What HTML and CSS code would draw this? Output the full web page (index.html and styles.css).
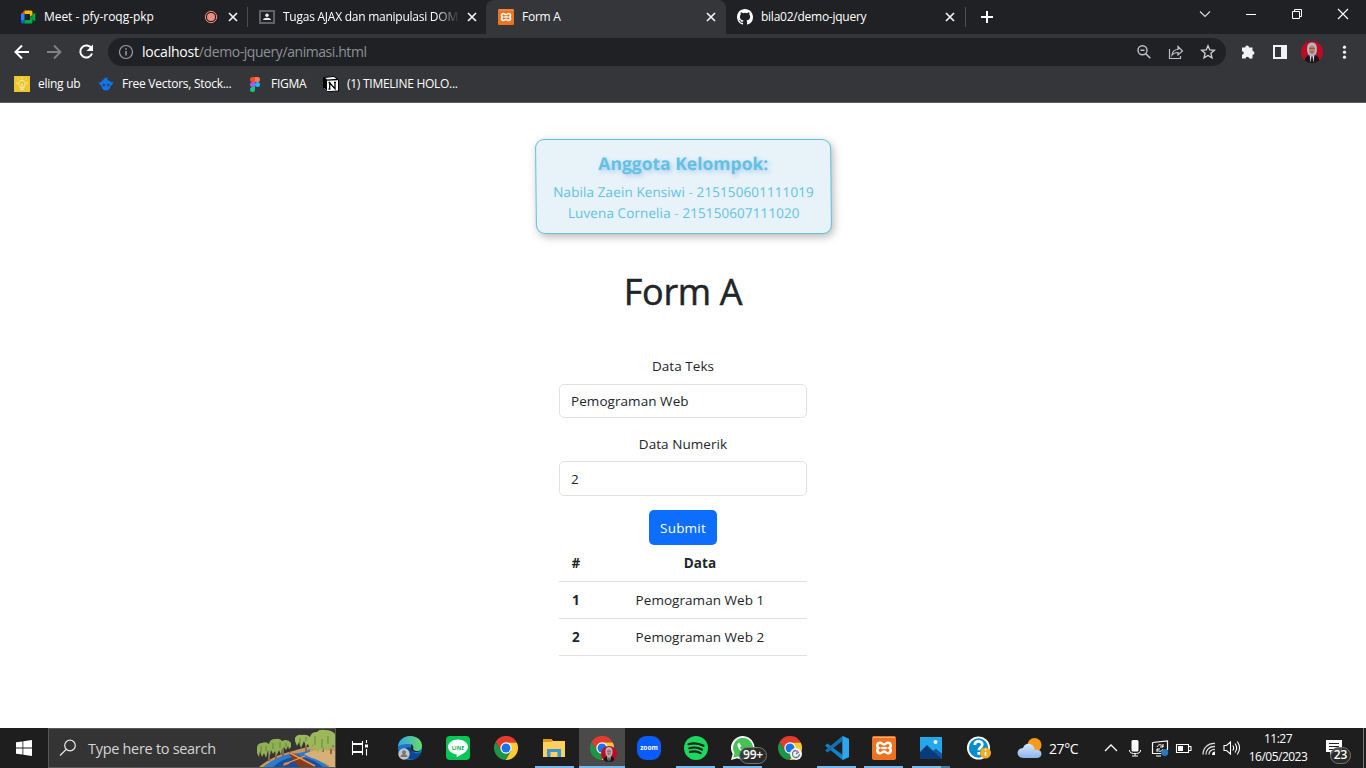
FILE: index.html
```html
<!DOCTYPE html>
<html lang="id">
<head>
<meta charset="utf-8">
<title>Form A</title>
<link rel="stylesheet" href="styles.css">
</head>
<body>
<svg class="defs" width="0" height="0" aria-hidden="true">
  <defs>
    <symbol id="close" viewBox="0 0 16 16"><path d="M4 4l8 8M12 4l-8 8" stroke="#f1f3f4" stroke-width="1.7" fill="none"/></symbol>
    <symbol id="chrome" viewBox="0 0 24 24">
      <path d="M12 6.500H22.700A12 12 0 0 0 1.600 6L7.200 14.800z" fill="#e33b2e"/>
      <path d="M16.800 14.800L11.500 24A12 12 0 0 0 22.700 6.500H12z" fill="#fcc934"/>
      <path d="M7.200 14.800L1.600 6A12 12 0 0 0 11.500 24l5.300-9.200z" fill="#1e9447"/>
      <circle cx="12" cy="12" r="5.700" fill="#fff"/><circle cx="12" cy="12" r="4.500" fill="#1a73e8"/>
    </symbol>
    <symbol id="xampp" viewBox="0 0 24 24">
      <rect width="24" height="24" rx="2" fill="#ee7320"/><path d="M1 1.500h22" stroke="#f7b184"/>
      <g transform="translate(1.200 1.200) scale(.9)"><path d="M7.700 6.200c2.200 0 2.200 1.800 4.300 1.800s2.100-1.800 4.300-1.800c3.600 0 4.100 4.500 1.600 5.800 2.500 1.300 2 5.800-1.600 5.800-2.200 0-2.200-1.800-4.300-1.800s-2.100 1.800-4.300 1.800c-3.600 0-4.100-4.500-1.600-5.800-2.500-1.300-2-5.800 1.600-5.800z" fill="none" stroke="#fff" stroke-width="2.800"/>
      <path d="M9 12h6" stroke="#fff" stroke-width="2.500"/></g>
    </symbol>
    <symbol id="person" viewBox="0 0 24 24">
      <circle cx="12" cy="12" r="12" fill="#c00925"/>
      <path d="M4 21Q4.500 16.500 8.500 15.500h7q4 1 4.500 5.500A12 12 0 0 1 4 21z" fill="#15171e"/>
      <path d="M12 1.500C6 1.500 6.500 8 6.800 11c.2 3.500 2.700 6 5.200 6s5-2.500 5.200-6c.3-3 .8-9.500-5.200-9.500z" fill="#aeb9c4"/>
      <ellipse cx="12" cy="9.700" rx="3.300" ry="4.700" fill="#b98672"/><path d="M9 8h6M10.500 12h3" stroke="#72463b" stroke-width=".9"/>
      <path d="M9.500 16l2.500 1.500 2.500-1.500-1 7h-3z" fill="#eee"/><path d="M11.200 17.500h1.600l.4 6h-2.400z" fill="#111"/>
    </symbol>
  </defs>
</svg>

<header class="browser">
  <div class="tabstrip">
    <div class="tab">
      <svg class="fav" viewBox="0 0 16 16"><path d="M1 5l3.500-3.500V5z" fill="#ea4335"/><path d="M4.500 1.500H11q1.500 0 1.500 1.500v3L10 8V5H4.500z" fill="#fbbc04"/><path d="M1 5h3.500v6H1z" fill="#2684fc"/><path d="M1 11h3.500v3.500H2.500Q1 14.500 1 13z" fill="#0066da"/><path d="M4.500 11H10V8l2.500 2v3q0 1.500-1.500 1.500H4.500zM10 8l4.500-4q.8-.5.8.4v7.200q0 .9-.8.4z" fill="#00ac47"/><path d="M10 8l2.500-2v4z" fill="#00832d"/></svg>
      <span class="tab-title t-meet">Meet - pfy-roqg-pkp</span>
      <svg class="rec" viewBox="0 0 14 14"><circle cx="7" cy="7" r="5.700" fill="none" stroke="#f28b82"/><circle cx="7" cy="7" r="4" fill="#f28b82"/></svg>
      <svg class="x"><use href="#close"/></svg>
    </div>
    <div class="tab">
      <svg class="fav" viewBox="0 0 16 16"><path d="M1 2h14v12H1z" fill="#202124" stroke="#5f6368" stroke-width="2"/><circle cx="8" cy="6.300" r="1.700" fill="#e8eaed"/><path d="M4 11c0-3 8-3 8 0z" fill="#e8eaed"/></svg>
      <span class="tab-title fade">Tugas AJAX dan manipulasi DOM</span>
      <svg class="x"><use href="#close"/></svg>
    </div>
    <div class="tab active">
      <svg class="fav"><use href="#xampp"/></svg>
      <span class="tab-title">Form A</span>
      <svg class="x"><use href="#close"/></svg>
    </div>
    <div class="tab">
      <svg class="fav" viewBox="0 0 16 16"><path fill="#fff" d="M8 0C3.580 0 0 3.580 0 8c0 3.540 2.290 6.530 5.470 7.590.4.070.55-.17.55-.38v-1.490c-2.010.37-2.530-.49-2.690-.94-.09-.23-.48-.94-.82-1.130-.28-.15-.68-.52-.01-.53.63-.01 1.080.58 1.230.82.72 1.210 1.870.87 2.330.66.070-.52.280-.87.510-1.070-1.780-.2-3.640-.89-3.640-3.950 0-.87.310-1.590.820-2.150-.080-.2-.36-1.020.080-2.120 0 0 .67-.21 2.200.82a7.400 7.400 0 0 1 4 0c1.530-1.040 2.200-.82 2.200-.82.440 1.100.160 1.920.080 2.120.510.560.820 1.270.820 2.150 0 3.070-1.870 3.750-3.650 3.950.290.250.540.730.540 1.480v2.200c0 .21.150.46.550.38A8 8 0 0 0 16 8c0-4.420-3.580-8-8-8z"/></svg>
      <span class="tab-title">bila02/demo-jquery</span>
      <svg class="x"><use href="#close"/></svg>
    </div>
    <div class="newtab"><svg width="16" height="16" viewBox="0 0 16 16"><path d="M8 2v12M2 8h12" stroke="#fff" stroke-width="2"/></svg></div>
    <div class="window-buttons">
      <svg viewBox="0 0 16 16"><path d="M3 5.500l5 5 5-5" fill="none" stroke="#ddd" stroke-width="1.100"/></svg>
      <svg viewBox="0 0 16 16"><path d="M3 8.500h10" stroke="#fff"/></svg>
      <svg viewBox="0 0 16 16"><path d="M3.500 5.500h7v7h-7zM5.500 5.500v-2h7v7h-2" fill="none" stroke="#fff"/></svg>
      <svg viewBox="0 0 16 16"><path d="M3 3l10 10M13 3L3 13" stroke="#fff" stroke-width="1.100"/></svg>
    </div>
  </div>

  <div class="toolbar">
    <div class="nav">
      <svg viewBox="0 0 20 20"><path d="M17 10H4M10 3.500L3.500 10l6.500 6.500" fill="none" stroke="#fff" stroke-width="2"/></svg>
      <svg viewBox="0 0 20 20"><path d="M3 10h13M10 3.500l6.500 6.500-6.500 6.500" fill="none" stroke="#818286" stroke-width="1.800"/></svg>
      <svg viewBox="0 0 20 20"><path d="M15.500 6.500A6 6 0 1 0 16 11.500" fill="none" stroke="#fff" stroke-width="2"/><path d="M17 2.500v6.500h-6.500z" fill="#fff"/></svg>
    </div>
    <div class="omnibox">
      <svg class="info" viewBox="0 0 16 16"><circle cx="8" cy="8" r="6.500" fill="none" stroke="#9aa0a6" stroke-width="1.200"/><path d="M8 7v4.500M8 4.200v1.600" stroke="#9aa0a6" stroke-width="1.500"/></svg>
      <span class="url"><b>localhost</b>/demo-jquery/animasi.html</span>
      <div class="omni-icons">
        <svg viewBox="0 0 16 16"><circle cx="6.500" cy="6.300" r="4.500" fill="none" stroke="#bdc1c6" stroke-width="1.400"/><path d="M4.500 6.300h4M9.800 9.800l4.500 4.500" stroke="#bdc1c6" stroke-width="1.600"/></svg>
        <svg viewBox="0 0 16 16"><path d="M1.500 5v9.500h11V12M4 11c.5-4 3-5.500 6-5.500V2.500L14.500 7 10 11V8.500C7.500 8.500 5.500 9 4 11z" fill="none" stroke="#bdc1c6" stroke-width="1.200"/></svg>
        <svg viewBox="0 0 16 16"><path d="M8 1.700l1.800 4.200 4.600.4-3.500 3 1.100 4.500L8 11.400l-4 2.400 1.100-4.500-3.500-3 4.600-.4z" fill="none" stroke="#d0d3d6" stroke-width="1.300"/></svg>
      </div>
    </div>
    <div class="actions">
      <svg viewBox="0 0 16 16"><path fill="#f1f3f4" d="M2 3.500h3.200a1.900 1.900 0 1 1 3.800 0h3.500V7a1.900 1.900 0 1 1 0 3.800v3.700H9.200a1.800 1.800 0 0 0-3.600 0H2v-3.700a1.800 1.800 0 0 0 0-3.600z"/></svg>
      <svg viewBox="0 0 16 16"><path d="M1 1h14v14H1zM3 3v10h6V3z" fill="#f1f3f4" fill-rule="evenodd"/></svg>
      <svg class="avatar"><use href="#person"/></svg>
      <svg viewBox="0 0 16 16"><circle cx="8.500" cy="3.200" r="1.600" fill="#f1f3f4"/><circle cx="8.500" cy="8.200" r="1.600" fill="#f1f3f4"/><circle cx="8.500" cy="13.200" r="1.600" fill="#f1f3f4"/></svg>
    </div>
  </div>

  <div class="bookmarks">
    <span class="bm bm1"><svg viewBox="0 0 16 16"><path d="M0 0h16v16H0z" fill="#edc52f"/><path d="M6 10.500C3.500 8 5 4.500 8 4.500s4.500 3.500 2 6v1.500H6zM6.500 13.500h3M7 8l1 1 1-1M8 9v3M8 1v2M2 7h1.500M12.500 7H14M3.500 2.500l1 1M12.500 2.500l-1 1" fill="none" stroke="#fff3c0" stroke-width=".9"/></svg><span>eling ub</span></span>
    <span class="bm bm2"><svg viewBox="0 0 16 16"><path d="M5 4l2-2 3-.5-1 2.500 3 1 1.500 1.500 2-.5-1.500 3-1.500 1C12 13 10.500 14.500 8 14.500S4 13 3.500 10L2 9 .5 6l2 .5z" fill="#1273eb"/><circle cx="5.800" cy="9" r="1.200" fill="#253f68"/><circle cx="10.200" cy="9" r="1.200" fill="#253f68"/></svg><span>Free Vectors, Stock...</span></span>
    <span class="bm bm3"><svg viewBox="0 0 16 16"><path d="M8 1v5H5.500a2.500 2.500 0 0 1 0-5z" fill="#f24e1e"/><path d="M8 1h2.500a2.500 2.500 0 0 1 0 5H8z" fill="#ff7262"/><path d="M8 6v5H5.500a2.500 2.500 0 0 1 0-5z" fill="#a259ff"/><circle cx="10.500" cy="8.500" r="2.500" fill="#1abcfe"/><path d="M8 11v2.500A2.500 2.500 0 1 1 5.500 11z" fill="#0acf83"/></svg><span>FIGMA</span></span>
    <span class="bm bm4"><svg viewBox="0 0 16 16"><path d="M.5 1.500L11 .5l4.500 3.500v11L4 15.700.500 12z" fill="#fff" stroke="#000"/><path d="M1 2l3 2.500V15L1 11.500z" fill="#000"/><path d="M1 1.800l3 2.400 11-.7" fill="none" stroke="#000" stroke-width="1.300"/><path d="M6.700 12.800V6.900l5.300 5.900V6.500M5.500 6.700h2M11 6.400h2M5.500 13h2" fill="none" stroke="#000" stroke-width="1.300"/></svg><span>(1) TIMELINE HOLO...</span></span>
  </div>
</header>

<main class="page">
  <section class="card">
    <h2>Anggota Kelompok:</h2>
    <p>Nabila Zaein Kensiwi - 215150601111019</p>
    <p>Luvena Cornelia - 215150607111020</p>
  </section>
  <h1>Form A</h1>
  <form class="form">
    <label for="teks">Data Teks</label>
    <input id="teks" type="text" value="Pemograman Web">
    <label for="num">Data Numerik</label>
    <input id="num" type="text" value="2">
    <button type="button">Submit</button>
  </form>
  <table>
    <thead><tr><th>#</th><th>Data</th></tr></thead>
    <tbody>
      <tr><th>1</th><td>Pemograman Web 1</td></tr>
      <tr><th>2</th><td>Pemograman Web 2</td></tr>
    </tbody>
  </table>
</main>

<footer class="taskbar">
  <div class="start"><svg width="16" height="16" viewBox="0 0 16 16"><path d="M0 2.300L6.500 1.400v6.200H0zM7.300 1.300L16 0v7.600H7.300zM0 8.400h6.500v6.200L0 13.700zM7.300 8.400H16V16l-8.700-1.300z" fill="#fff"/></svg></div>
  <div class="search">
    <svg class="glass" viewBox="0 0 18 18"><circle cx="11" cy="6.500" r="5.300" fill="none" stroke="#e8e8e8" stroke-width="1.200"/><path d="M7.200 10.400L1 16.500" stroke="#e8e8e8" stroke-width="1.300"/></svg>
    <span>Type here to search</span>
    <svg class="scene" viewBox="0 0 78 38">
      <path d="M2 38C12 30 20 26 36 22s24-8 42-4v20z" fill="#c79a5b"/>
      <path d="M6 38c12-9 20-13 35-14 14-2 8-3 12-4-2 7 8 10 19 18z" fill="#2c7bd1"/><path d="M16 38c8-7 15-10 26-10 8 0 17 4 24 10z" fill="#174f9e"/>
      <path d="M47 25c7-3 16-6 31-3v16h-4C68 32 54 30 47 25z" fill="#d8b075"/>
      <path d="M12 32V19M19 31V15M26 27V14M49 23V9M66 23V9M74 25V13" stroke="#8d654d" stroke-width="2"/>
      <path d="M0 26V18q1-4 5-4 4-2 7 1 1-5 6-5 5-1 7 2 6-3 9 2v4l-2 2-1-3-2 4-2-3-2 2-1 6-2-5-2 5-2-4-2 3-2-4-1 6-2-6-2 8-2-5-2 4-2-6-1 6-2-4z" fill="#91af55"/>
      <path d="M38 16V9q2-4 7-3 5-1 8 2 1-5 7-5 2-3 8-2 7 0 10 4v15l-2-4-2 5-2-4-2 6-3-5-2 6-2-5-2 6-2-7-2 5-1-7-3 4-2-5-2 2-2-5-3 7-2-6-2 4-2-5z" fill="#9bb95b"/>
      <path d="M4 17v6M9 17v5M16 14v6M23 13v6M29 14v4M43 9v7M49 8v4M58 7v9M65 10v9M71 7v8" stroke="#66853c"/>
      <path d="M32 23l9 3 18 11-6 1H43C37 33 33 29 32 23z" fill="#883c1c"/><path d="M33 24l25 13" stroke="#e2985e" stroke-width="1.500"/><path d="M48 27L33 33" stroke="#ef9f4b" stroke-width="1.300"/><path d="M27 34l7-2-2 3-6 2z" fill="#e9863b"/>
    </svg>
  </div>
  <div class="task view"><svg width="18" height="18" viewBox="0 0 18 18"><path d="M1.500 2v2.500h10V2M1.500 16v-2.500h10V16M1.500 5.500v7h10v-7zM15.500 1v3M15.500 10v6.500" fill="none" stroke="#fff" stroke-width="1.100"/><path d="M14 5.500h3v3h-3z" fill="#fff"/></svg></div>
  <div class="task"><svg viewBox="0 0 24 24"><defs><linearGradient id="eg" x1="0" x2="1"><stop stop-color="#2fa6e9"/><stop offset="1" stop-color="#68dc65"/></linearGradient></defs><circle cx="12" cy="12" r="12" fill="#1b76c4"/><path d="M0 11C1-4 24-3 24 10c0 6-8 7-10 4 2-3 0-6-4-6C5 8 1 9 0 11z" fill="url(#eg)"/><path d="M8 12c2-2 5-1 6 1-1 4 5 6 9 3-3 10-14 9-15 2z" fill="#0b4697"/><path d="M13 12c0 5 6 5 11 2-5 2-8 1-9-1 1-2 0-4-2-5z" fill="#222"/><circle cx="6" cy="18" r="5.700" fill="#c5c5c5"/><circle cx="6" cy="16.200" r="2" fill="#767676"/><path d="M2.500 21c0-4 7-4 7 0z" fill="#767676"/></svg></div>
  <div class="task"><svg viewBox="0 0 24 24"><rect width="24" height="24" rx="4" fill="#06c755"/><path d="M12 3.500c-5.500 0-10 3.300-10 7.500 0 3.700 3.500 6.500 8 7.300.9.200.8.600.6 2.200-.1.800.3.700 1 .3C16 18.300 22 15.500 22 11c0-4.200-4.500-7.500-10-7.500z" fill="#fff"/><text x="12" y="13.500" class="line-text">LINE</text></svg></div>
  <div class="task"><svg><use href="#chrome"/></svg></div>
  <div class="task open"><svg viewBox="0 0 24 24"><path d="M1 3h8l2 2h12v16H1z" fill="#ffd05c"/><path d="M1 3h8l2 2-2 1H1z" fill="#e39b16"/><path d="M5 21v-8h14v8h-3.500v-5h-7v5z" fill="#3c94d5"/></svg></div>
  <div class="task open current"><svg><use href="#chrome"/></svg><svg class="profile"><use href="#person"/></svg></div>
  <div class="task n"><svg viewBox="0 0 24 24"><rect width="24" height="24" rx="9" fill="#0b5cff"/><text x="12" y="14" class="zoom-text">zoom</text></svg></div>
  <div class="task n open"><svg viewBox="0 0 24 24"><circle cx="12" cy="12" r="12" fill="#1ed760"/><path d="M4.500 8.200q8-2.200 15 1.600M5.300 12.200q7-1.900 12.700 1.400M6 15.900q6-1.500 10.600 1.200" fill="none" stroke="#152318" stroke-width="2.200" stroke-linecap="round"/></svg></div>
  <div class="task n open"><svg viewBox="0 0 24 24"><path d="M0 24l1.700-6A11.800 11.800 0 1 1 6.300 22.300z" fill="#fff"/><path d="M2.300 21.700l1.300-4.400a10 10 0 1 1 3.300 3.200z" fill="#45c454"/><path d="M8 6.500c-3 2-1 6 2 8.500s6 3 7 .5l-3-2-1.500 1.500c-2-1-3-2.300-3.500-3.500l1.300-1.500z" fill="#fff"/></svg><span class="badge">99+</span></div>
  <div class="task n"><svg viewBox="0 0 24 24"><use href="#chrome" width="24" height="24"/><circle cx="18" cy="18" r="6" fill="#f5f5f5"/><path d="M18 14.500a3.500 3.500 0 1 0 3.500 3.500M18 18l3-2" fill="none" stroke="#5b7c86" stroke-width="1.300"/><circle cx="19" cy="15.500" r="1.200" fill="#b47ac0"/></svg></div>
  <div class="task n open"><svg viewBox="0 0 24 24"><path d="M17.500 0L24 3v18l-6.500 3L0 9.500l2.500-2L17.500 19z" fill="#0b85cf"/><path d="M17.500 5L2.500 16.500l-2.500-2L17.500 0z" fill="#1271b5"/><path d="M17.500 0L24 3v18l-6.500 3z" fill="#2da6ef"/></svg></div>
  <div class="task n open"><svg><use href="#xampp"/></svg></div>
  <div class="task n open stacked"><svg viewBox="0 0 24 24"><path d="M1 1h22v22H1z" fill="#24a8ec"/><path d="M1 16l7-7 6 6 3-2 6 5v5H1z" fill="#073b79"/><path d="M14 15l3-2 6 5v5z" fill="#17569e"/><circle cx="16.500" cy="6" r="2" fill="#e8f6ff"/></svg></div>
  <div class="task help"><svg viewBox="0 0 24 24"><circle cx="11.500" cy="12" r="11.500" fill="#fff"/><circle cx="11.500" cy="12" r="9.700" fill="#078ccc"/><path d="M7.800 9c0-5 7.500-4.500 7.500-.5 0 3-3.500 3-3.500 5.700M11.800 16v2.700" fill="none" stroke="#fff" stroke-width="2.700"/><circle cx="18.500" cy="17" r="5.500" fill="#f1ac22"/><path d="M18.500 16v4M18.500 13v1.600" stroke="#fff" stroke-width="1.600"/></svg></div>
  <div class="weather"><svg viewBox="0 0 26 22"><defs><linearGradient id="cl" x2="0" y2="1"><stop stop-color="#d8e8ff"/><stop offset="1" stop-color="#8cb3ef"/></linearGradient></defs><circle cx="17.500" cy="8" r="7" fill="#f59a1b"/><path d="M6 21q-5-.3-5.500-5 .3-4.700 5.500-5Q8 6 13 7q4 1 5 6 6-1 6.500 4-.5 4-5 4z" fill="url(#cl)"/></svg><span>27°C</span></div>
  <div class="tray">
    <svg class="chev" viewBox="0 0 18 18"><path d="M3 12l6-6 6 6" fill="none" stroke="#fff" stroke-width="1.300"/></svg>
    <svg class="mic" viewBox="0 0 18 18"><rect x="5.500" y="1" width="7" height="11.500" rx="1.500" fill="#fff"/><path d="M3.500 11v1q.5 2.500 4 2.500h3q3.500 0 4-2.500v-1M9 14.500V17M6 17h6" fill="none" stroke="#fff"/></svg>
    <svg class="sync" viewBox="0 0 18 18"><path d="M1.500 3.500L16.500 2v9M1.500 3.500v11H10M5 17h5" fill="none" stroke="#fff" stroke-width="1.200"/><path d="M6 8c1-3 5-3 6 0M12 5v3H9M12 10c-1 3-5 3-6 0M6 13v-3h3" fill="none" stroke="#fff"/><circle cx="13.700" cy="13.500" r="3.500" fill="#2878c8"/></svg>
    <svg class="bat" viewBox="0 0 18 18"><path d="M1.500 5.500h12v8h-12zM14 7.500h2v4h-2" fill="none" stroke="#fff" stroke-width="1.100"/><path d="M3 7h5v5H3z" fill="#fff"/></svg>
    <svg class="wifi" viewBox="0 0 18 18"><path d="M3 15.500C3 9 8 4 15 4.500M6 15.500C6 11 9 7.300 15 7.500M9 15.500c0-3 2-5.300 6-5.200" fill="none" stroke="#ddd" stroke-width="1.300"/><path d="M12 16c0-2 1-3.500 3-3.500V16z" fill="#fff"/></svg>
    <svg class="sound" viewBox="0 0 18 18"><path d="M1 6.500h2.500L7.500 3v12l-4-3.500H1zM9.700 6.500q2 2.500 0 5M12 4.500q3.300 4.500 0 9M14.300 2.500q4.500 6.500 0 13" fill="none" stroke="#fff" stroke-width="1.100"/></svg>
  </div>
  <div class="clock"><span>11:27</span><span>16/05/2023</span></div>
  <div class="notice"><svg width="18" height="18" viewBox="0 0 18 18"><path d="M1 1h16v12H9l-4 4v-4H1z" fill="#fff"/><path d="M4 4.500h10M4 7.500h10M4 10.500h6" stroke="#222"/></svg><span class="badge">23</span></div>
</footer>
</body>
</html>
```

FILE: styles.css
```css
* { box-sizing: border-box; }
body { margin: 0; width: 1366px; height: 768px; overflow: hidden; display: flex; flex-direction: column; font-family: "Open Sans", "Noto Sans", sans-serif; background: #fff; }
svg { display: block; flex: none; }
.defs { position: absolute; }

.browser { height: 103px; flex: none; background: #35363a; border-bottom: 1px solid #5c5d61; color: #fff; }
.tabstrip { height: 34px; background: #202124; display: flex; padding-left: 8px; }
.tab { width: 240px; margin-right: -1px; height: 34px; display: flex; align-items: center; padding: 0 7px 0 12px; font-size: 12px; white-space: nowrap; }
.tab:nth-child(1), .tab:nth-child(4) { background: linear-gradient(#4b4c50, #4b4c50) 100% 7px / 1px 20px no-repeat; }
.tab:nth-child(4) { width: 241px; padding-right: 8px; margin-right: -2px; }
.fav { width: 16px; height: 16px; margin-right: 8px; }
.tab-title { flex: 1; min-width: 0; overflow: hidden; letter-spacing: -.25px; line-height: 20px; }
.t-meet { letter-spacing: -.05px; }
.fade { flex: none; width: 177px; mask-image: linear-gradient(90deg, #000 152px, transparent 177px); }
.fade + .x { margin-left: auto; }
.rec { width: 14px; height: 14px; margin-right: 7px; }
.x { width: 16px; height: 16px; }
.active { background: #35363a; border-radius: 8px 8px 0 0; }
.newtab { width: 46px; display: flex; align-items: center; justify-content: center; }
.window-buttons { margin-left: auto; display: flex; gap: 30px; padding: 6px 15px 0 0; }
.window-buttons svg { width: 16px; height: 16px; }

.toolbar { height: 36px; display: flex; align-items: center; padding-left: 12px; }
.nav { display: flex; gap: 12px; width: 96px; }
.nav svg { width: 20px; height: 20px; }
.omnibox { width: 1118px; height: 28px; border-radius: 14px; background: #202124; display: flex; align-items: center; padding: 0 10px; }
.info { width: 16px; height: 16px; margin-right: 8px; }
.url { font-size: 14px; letter-spacing: -.43px; color: #8d9196; line-height: 26px; }
.url b { color: #fff; font-weight: 400; letter-spacing: -.2px; }
.omni-icons { display: flex; gap: 16px; margin-left: auto; }
.omni-icons svg, .actions svg { width: 16px; height: 16px; }
.actions { display: flex; align-items: center; gap: 16px; padding-left: 14px; }
.actions .avatar { width: 22px; height: 22px; margin: 0 -3px; }

.bookmarks { height: 32px; display: flex; align-items: center; padding: 0 0 4px 14px; font-size: 12px; letter-spacing: -.27px; }
.bm { display: flex; align-items: center; white-space: nowrap; }
.bm svg { width: 16px; height: 16px; margin-right: 8px; }
.bm span { position: relative; top: -1px; }
.bm1 { width: 84px; } .bm2 { width: 149px; } .bm3 { width: 76px; }

.page { height: 625px; display: flex; flex-direction: column; align-items: center; padding-top: 36px; color: #212529; font-size: 13.5px; }
.card { width: 296px; height: 95px; border: 1px solid #62c2dc; border-radius: 9px; background: #e7f2f9; color: #62c2e2; box-shadow: 2px 3px 9px rgba(0,0,0,.28); text-align: center; transform: translateX(.5px) skewX(.6deg); padding-top: 10px; }
.card h2 { margin: 0 0 6px; font-size: 17.5px; line-height: 26px; text-shadow: 2px 2px 4px #a8c8f3; }
.card p { margin: 0; font-size: 13.5px; line-height: 21px; letter-spacing: .1px; white-space: nowrap; }
h1 { margin: 33px 0 0; font-size: 36px; line-height: 50px; font-weight: 500; letter-spacing: -.35px; -webkit-text-stroke: .5px #212529; }
.form { width: 248px; margin-top: 38px; display: flex; flex-direction: column; align-items: center; letter-spacing: .06px; }
.form label { height: 29px; line-height: 22px; }
.form input { width: 248px; height: 34px; margin: 0 0 15px; padding: 0 11px; border: 1px solid #dee2e6; border-radius: 5px; font: inherit; letter-spacing: inherit; color: #212529; }
.form label:nth-of-type(2) { height: 28px; }
.form input:last-of-type { height: 35px; margin-bottom: 14px; }
.form button { width: 68px; height: 35px; border: 0; padding: 0; border-radius: 5px; background: #0d6efd; color: #fff; font: inherit; letter-spacing: .2px; }
table { width: 248px; border-collapse: collapse; table-layout: fixed; text-align: center; letter-spacing: .05px; }
th, td { height: 37px; padding: 0; border-bottom: 1px solid #dee2e6; }
thead th { height: 36px; }
th:first-child { width: 34px; }

.taskbar { height: 40px; flex: none; background: #1e1e1e; color: #fff; display: flex; }
.start { width: 48px; display: flex; align-items: center; justify-content: center; }
.search { width: 288px; height: 40px; background: #343434; border: 1px solid #585858; display: flex; align-items: center; color: #d5d5d5; font-size: 14.5px; letter-spacing: -.3px; }
.glass { width: 18px; height: 18px; margin: 0 11px 0 10px; }
.scene { width: 78px; height: 38px; margin-left: auto; }
.task { width: 48px; height: 40px; display: flex; align-items: center; justify-content: center; position: relative; }
.task > svg { width: 24px; height: 24px; }
.task.view { width: 50px; padding-right: 2px; }
.task.view > svg { width: 18px; height: 18px; }
.task.n { width: 47px; }
.task.help { width: 50px; }
.open { background: linear-gradient(#76b9ed, #76b9ed) 50% 100% / 39px 2px no-repeat; }
.open.current { background: linear-gradient(#76b9ed, #76b9ed) 0 100% / 100% 2px no-repeat #4a4a4a; width: 46px; margin: 0 0 0 1px; }
.open.stacked { background: linear-gradient(90deg, #76b9ed 29px, #50789b 29px) 50% 100% / 38px 2px no-repeat; }
.task > .profile { position: absolute; width: 16px; height: 16px; left: 22px; top: 18px; }
.line-text { font: 700 5.5px "Open Sans", sans-serif; fill: #06b84d; text-anchor: middle; }
.zoom-text { font: 700 6.5px "Open Sans", sans-serif; fill: #fff; text-anchor: middle; }
.badge { position: absolute; border: 1px solid #777; border-radius: 9px; background: rgba(45,45,45,.85); height: 17px; width: 28px; left: 20px; top: 19px; font-size: 12px; font-weight: 600; line-height: 14px; text-align: center; letter-spacing: -.2px; }
.weather { width: 96px; display: flex; align-items: center; padding-left: 13px; font-size: 14px; letter-spacing: -.4px; }
.weather svg { width: 26px; height: 22px; margin-right: 6px; }
.tray { width: 142px; display: flex; align-items: center; padding-left: 2px; gap: 6px; }
.tray svg { width: 18px; height: 18px; }
.tray .sync { margin-left: 1px; }
.tray .wifi { margin-left: 1px; }
.tray .sound { margin-left: -1px; }
.clock { width: 72px; display: flex; flex-direction: column; align-items: center; padding-top: 2px; font-size: 12px; line-height: 18px; letter-spacing: -.52px; }
.notice { width: 50px; border-right: 1px solid #777; position: relative; padding: 11px 0 0 11px; }
.notice .badge { width: 21px; left: 16px; }
```
